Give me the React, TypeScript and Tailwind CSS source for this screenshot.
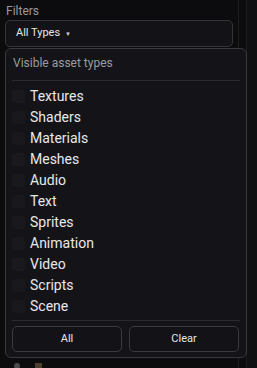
import React from "react";

const items = ["Textures","Shaders","Materials","Meshes","Audio","Text","Sprites","Animation","Video","Scripts","Scene"];

export default function App() {
  return (
    <div className="w-[257px] h-[368px] bg-[#0c0c0f] flex overflow-hidden" style={{ fontFamily: "Roboto, 'Liberation Sans', sans-serif" }}>
      <div className="relative w-[239px] h-full border-r border-[#1f1f23]">
        <div className="pl-[6px] pt-[3px] text-[12px] leading-[16px] text-[#9a9a9e]">Filters</div>
        <div className="ml-[5px] mt-[1px] w-[228px] h-[27px] rounded-[5px] border border-[#333338] bg-[#131317] flex items-center pl-[10px] text-[11px] text-[#e6e6e6]">
          All Types <span className="ml-[5px] text-[6px] text-[#cfcfcf]">▼</span>
        </div>
        <div className="absolute left-[5px] top-[48px] w-[242px] h-[310px] rounded-[6px] border border-[#38383d] bg-[#141418] z-10 px-[6px]">
          <div className="pt-[6px] pl-[1px] text-[12px] leading-[16px] text-[#9b9b9f]">Visible asset types</div>
          <div className="mt-[9px] h-px bg-[#2a2a2f]" />
          <div className="pt-[5px] flex flex-col">
            {items.map((t) => (
              <div key={t} className="h-[21px] flex items-center">
                <div className="w-[13px] h-[13px] rounded-[2px] bg-[#19191d]" />
                <span className="ml-[5px] text-[14px] text-[#e8e8ea]">{t}</span>
              </div>
            ))}
          </div>
          <div className="mt-[3px] h-px bg-[#2a2a2f]" />
          <div className="mt-[5px] flex gap-[7px]">
            <div className="w-[110px] h-[26px] rounded-[5px] border border-[#3a3a40] bg-[#131317] flex items-center justify-center text-[11px] text-[#e6e6e6]">All</div>
            <div className="w-[110px] h-[26px] rounded-[5px] border border-[#3a3a40] bg-[#131317] flex items-center justify-center text-[11px] text-[#e6e6e6]">Clear</div>
          </div>
        </div>
        <div className="absolute left-[14px] top-[363px] w-[6px] h-[6px] rounded-full bg-[#4a4a4e]" />
        <div className="absolute left-[35px] top-[363px] w-[7px] h-[6px] bg-[#4a3f2a]" />
      </div>
      <div className="flex-1 border-l border-[#1c1c20] ml-[7px] bg-[#101013]" />
    </div>
  );
}
